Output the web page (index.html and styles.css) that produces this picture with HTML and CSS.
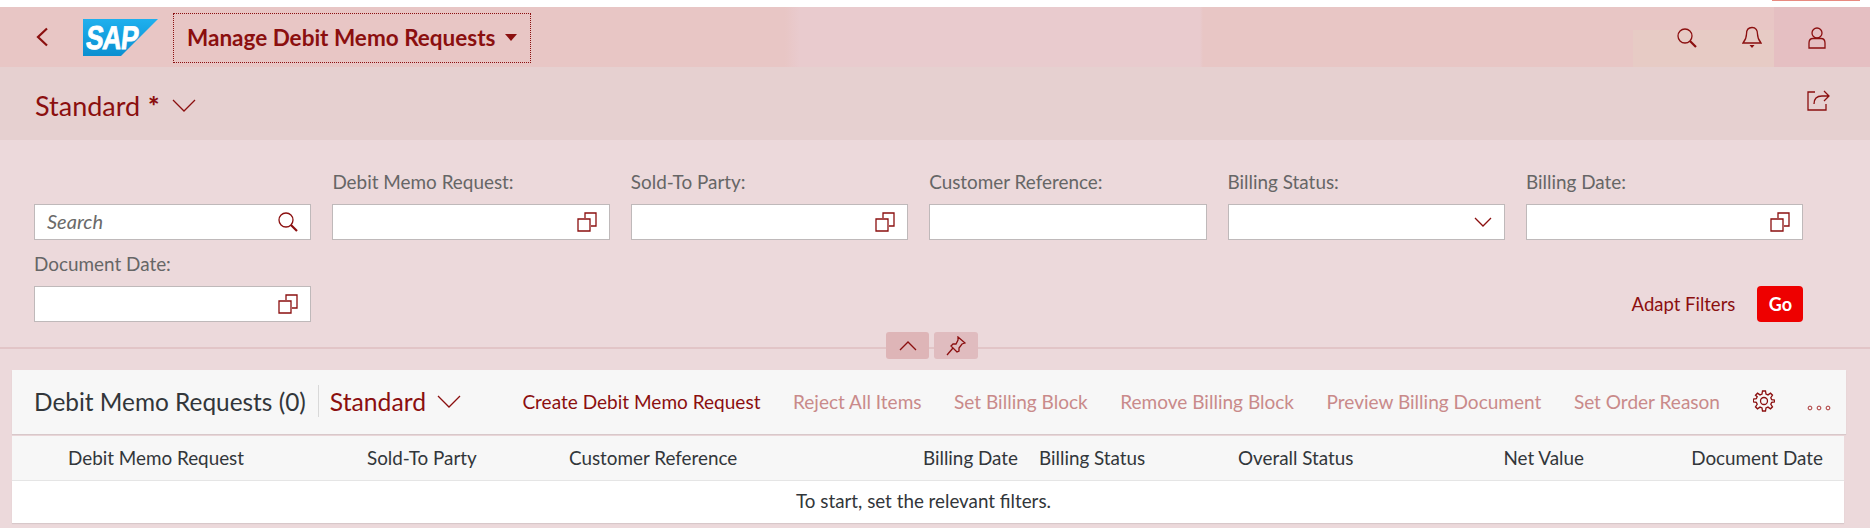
FILE: index.html
```html
<!DOCTYPE html>
<html lang="en">
<head>
<meta charset="utf-8">
<title>Manage Debit Memo Requests</title>
<link rel="stylesheet" href="styles.css">
</head>
<body>
<span class="browser-mark"></span>
<div class="page">
  <header class="shell">
    <button class="back" aria-label="Back">
      <svg width="14" height="20" viewBox="0 0 14 20"><path d="M12 1.500 3 10l9 8.500" class="ic2"/></svg>
    </button>
    <svg class="logo" width="75" height="37" viewBox="0 0 75 37" role="img" aria-label="SAP">
      <defs><linearGradient id="sapg" x1="0" y1="0" x2="0" y2="1"><stop offset="0" stop-color="#1fb0ee"/><stop offset="1" stop-color="#0b8fd0"/></linearGradient></defs>
      <path d="M0 0h75L38 37H0z" fill="url(#sapg)"/>
      <text transform="translate(2 30) scale(.8 1) skewX(-8)" class="logo-text">SAP</text>
    </svg>
    <button class="app-title">Manage Debit Memo Requests<span class="caret"></span></button>
    <div class="shell-actions">
      <div class="shell-tools">
        <svg class="tool-search" width="20" height="20" viewBox="0 0 20 20"><circle cx="8" cy="8" r="7" class="ic"/><path d="m13 13 6 6" class="ic2"/></svg>
        <svg class="tool-bell" width="20" height="23" viewBox="0 0 20 23"><path d="M10 1.500c-4 0-5.500 3-5.500 6.500 0 4-1 6-3.500 9h18c-2.500-3-3.500-5-3.500-9 0-3.500-1.500-6.500-5.500-6.500z" class="ic"/><path d="M7.500 19h5L10 22z" fill="#8b0f0f"/></svg>
      </div>
      <div class="shell-user">
        <svg width="18" height="22" viewBox="0 0 18 22"><circle cx="9" cy="6" r="5" class="ic"/><path d="M1 21v-5c0-3 2-4.500 4-4.500h8c2 0 4 1.500 4 4.500v5z" class="ic"/></svg>
      </div>
    </div>
  </header>

  <section class="title-bar">
    <button class="variant-big">Standard <b>*</b>
      <svg width="24" height="13" viewBox="0 0 24 13"><path d="m1 1 11 11L23 1" class="ic"/></svg>
    </button>
    <svg class="share" width="23" height="21" viewBox="0 0 23 21"><path d="M8 2H1v18h18v-6" class="ic"/><path d="M7 14c0-5 3-8 8-8h7M17 1l5 5-5 5" class="ic"/></svg>
  </section>

  <section class="filter-bar">
    <div class="field"><div class="input"><span class="placeholder">Search</span>
      <svg width="20" height="20" viewBox="0 0 20 20"><circle cx="8" cy="8" r="7" class="ic"/><path d="m13 13 6 6" class="ic2"/></svg></div></div>
    <div class="field"><label>Debit Memo Request:</label><div class="input">
      <svg width="20" height="20" viewBox="0 0 20 20"><path d="M8 6V1h11v13h-5" class="ic"/><path d="M1 7h12v12H1z" class="ic"/></svg></div></div>
    <div class="field"><label>Sold-To Party:</label><div class="input">
      <svg width="20" height="20" viewBox="0 0 20 20"><path d="M8 6V1h11v13h-5" class="ic"/><path d="M1 7h12v12H1z" class="ic"/></svg></div></div>
    <div class="field"><label>Customer Reference:</label><div class="input"></div></div>
    <div class="field"><label>Billing Status:</label><div class="input">
      <svg width="18" height="10" viewBox="0 0 18 10"><path d="m1 1 8 8 8-8" class="ic"/></svg></div></div>
    <div class="field"><label>Billing Date:</label><div class="input">
      <svg width="20" height="20" viewBox="0 0 20 20"><path d="M8 6V1h11v13h-5" class="ic"/><path d="M1 7h12v12H1z" class="ic"/></svg></div></div>
    <div class="field"><label>Document Date:</label><div class="input">
      <svg width="20" height="20" viewBox="0 0 20 20"><path d="M8 6V1h11v13h-5" class="ic"/><path d="M1 7h12v12H1z" class="ic"/></svg></div></div>
    <div class="filter-actions">
      <button class="adapt">Adapt Filters</button>
      <button class="go">Go</button>
    </div>
  </section>

  <div class="divider">
    <button class="tab tab-collapse"><svg width="18" height="10" viewBox="0 0 18 10"><path d="m1 9 8-8 8 8" class="ic"/></svg></button>
    <button class="tab tab-pin"><svg width="20" height="20" viewBox="0 0 20 20"><path d="m12 1 7 6-3 1-3 4 0 3-2 1-6-6 2-2 3 0 2-4z" class="ic"/><path d="m7 12-6 7" class="ic"/></svg></button>
  </div>

  <section class="table-card">
    <div class="toolbar">
      <h2 class="table-title">Debit Memo Requests (0)</h2>
      <span class="sep"></span>
      <button class="variant-small">Standard
        <svg width="24" height="13" viewBox="0 0 24 13"><path d="m1 1 11 11L23 1" class="ic"/></svg>
      </button>
      <div class="tb-actions">
        <button class="act">Create Debit Memo Request</button>
        <button class="act off">Reject All Items</button>
        <button class="act off">Set Billing Block</button>
        <button class="act off">Remove Billing Block</button>
        <button class="act off">Preview Billing Document</button>
        <button class="act off">Set Order Reason</button>
        <svg class="gear" width="22" height="22" viewBox="0 0 22 22"><circle cx="11" cy="11" r="3.500" class="ic"/><path d="M9.500 1h3l.5 3 2 .9 2.500-1.700 2 2-1.700 2.500.9 2 3 .5v1.600l-3 .5-.9 2 1.700 2.500-2 2-2.500-1.700-2 .9-.5 3h-3l-.5-3-2-.9-2.500 1.700-2-2 1.700-2.500-.9-2-3-.5V9.200l3-.5.9-2L2.500 5.200l2-2L7 4.900 9 4z" class="ic"/></svg>
        <svg class="more" width="24" height="6" viewBox="0 0 24 6"><circle cx="3" cy="3" r="1.900" class="ic-thin"/><circle cx="12" cy="3" r="1.900" class="ic-thin"/><circle cx="21" cy="3" r="1.900" class="ic-thin"/></svg>
      </div>
    </div>
    <div class="table">
      <div class="thead">
        <span>Debit Memo Request</span>
        <span>Sold-To Party</span>
        <span>Customer Reference</span>
        <span class="r">Billing Date</span>
        <span class="pl">Billing Status</span>
        <span>Overall Status</span>
        <span class="r">Net Value</span>
        <span class="r">Document Date</span>
      </div>
      <div class="empty">To start, set the relevant filters.</div>
    </div>
  </section>
</div>
</body>
</html>
```
FILE: styles.css
```css
* { box-sizing: border-box; }
html, body { margin: 0; padding: 0; background: #fff; }
body { width: 1873px; height: 528px; overflow: hidden; padding-top: 7px; font-family: "Lato", "Liberation Sans", sans-serif; position: relative; }
button { font: inherit; background: none; border: 0; padding: 0; color: inherit; }
svg { display: block; flex: none; }
.ic { fill: none; stroke: #8b0f0f; stroke-width: 1.300; }
.ic2 { fill: none; stroke: #8b0f0f; stroke-width: 2.200; }
.ic-thin { fill: none; stroke: #a33; stroke-width: 1; }

.browser-mark { position: absolute; left: 1772px; top: 0; width: 88px; height: 1px; background: #e88a80; }
.page { width: 1870px; height: 521px; background: #ecd9db; display: flex; flex-direction: column; color: #8b0f0f; }

.shell { height: 60px; flex: none; background: linear-gradient(90deg, #e8c6c5 785px, #e9cbce 800px, #e9cbce 1200px, #e8c6c5 1203px); display: flex; align-items: center; }
.back { margin-left: 35px; width: 14px; }
.logo { margin-left: 34px; }
.logo-text { font-family: "Liberation Sans", sans-serif; font-size: 33px; font-weight: 700; fill: #fff; stroke: #fff; stroke-width: .8px; letter-spacing: -1px; }
.app-title { margin-left: 15px; width: 358px; height: 50px; margin-top: 1px; border: 1px dotted #8b0f0f; display: flex; align-items: center; padding-left: 13px; font-size: 22.500px; font-weight: 700; color: #8b0f0f; white-space: nowrap; }
.caret { margin-left: 10px; width: 0; height: 0; border-left: 6px solid transparent; border-right: 6px solid transparent; border-top: 7px solid #8b0f0f; }
.shell-actions { margin-left: auto; display: flex; height: 60px; }
.shell-tools { width: 141px; align-self: flex-end; height: 37px; background: #e7cbc5; display: flex; align-items: flex-start; }
.tool-search { margin-left: 44px; margin-top: -2px; }
.tool-bell { margin-left: 45px; margin-top: -4px; }
.shell-user { width: 96px; background: #e5bfc2; display: flex; justify-content: flex-start; padding-left: 34px; padding-top: 20px; }

.title-bar { height: 73px; flex: none; background: #e6d0d0; display: flex; justify-content: space-between; padding: 0 40px 0 35px; position: relative; }
.variant-big { display: flex; align-items: center; gap: 12px; font-size: 27px; color: #8b0f0f; height: 76px; white-space: pre; }
.variant-big b { font-weight: 900; margin-left: -11px; }
.share { margin-top: 23px; }

.filter-bar { height: 207px; flex: none; padding: 31px 0 0 34px; display: grid; grid-template-columns: repeat(6, 277.400px); column-gap: 21px; grid-template-rows: 69px 69px; row-gap: 13px; background: #ecd9db; }
.field { display: flex; flex-direction: column; justify-content: flex-end; }
.field label { font-size: 18.900px; color: #666; line-height: 22px; height: 22px; margin-bottom: 11px; white-space: nowrap; }
.input { height: 36px; flex: none; background: #fff; border: 1px solid #bfb9ba; display: flex; align-items: center; justify-content: flex-end; padding: 0 12px; position: relative; }
.placeholder { margin-right: auto; font-size: 20px; font-style: italic; color: #6a6a6a; padding-bottom: 2px; }
.filter-actions { grid-column: 5 / 7; display: flex; justify-content: flex-end; align-items: flex-end; gap: 22px; }
.adapt { font-size: 18.500px; color: #8b0f0f; height: 36px; }
.go { width: 46px; height: 36px; background: #ee0000; color: #fff; font-size: 18px; font-weight: 700; border-radius: 4px; }

.divider { height: 2px; flex: none; background: #e2c5c7; position: relative; }
.tab { position: absolute; top: -15px; height: 27px; border-radius: 3px; display: flex; align-items: center; justify-content: center; }
.tab-collapse { left: 886px; width: 43px; background: #deb5b7; }
.tab-pin { left: 934px; width: 44px; background: #e0bcbf; }

.table-card { margin: 21px 0 0 12px; width: 1834px; }
.toolbar { height: 64px; background: #f7f7f7; box-shadow: 0 1px 1px #d8c8ca; display: flex; align-items: center; padding: 0 0 2px 22px; }
.table-title { margin: 0; font-size: 24.400px; font-weight: 400; color: #32363a; white-space: nowrap; }
.sep { width: 1px; height: 32px; background: #d9d9d9; margin: 0 11px 0 12px; }
.variant-small { display: flex; align-items: center; gap: 11px; font-size: 24.700px; color: #8b0f0f; }
.tb-actions { margin-left: auto; padding-right: 15px; display: flex; align-items: center; gap: 32.500px; }
.act { font-size: 19.050px; color: #8b0f0f; white-space: nowrap; }
.act.off { color: #c98a8a; }
.more { margin-top: 14px; }
.table { margin-top: 2px; width: 1832px; }
.thead { height: 45px; background: #f7f7f7; border-bottom: 1px solid #e5e5e5; display: grid; grid-template-columns: 299px 202px 300px 149px 220px 162px 184px 239px; align-items: center; padding: 0 0 2px 56px; font-size: 18.850px; color: #32363a; white-space: nowrap; }
.r { text-align: right; }
.pl { padding-left: 21px; }
.empty { height: 42px; background: #fff; display: flex; align-items: center; justify-content: center; padding: 0 9px 4px 0; font-size: 18.800px; color: #32363a; box-shadow: 0 1px 1px #d8c8ca; }
```
